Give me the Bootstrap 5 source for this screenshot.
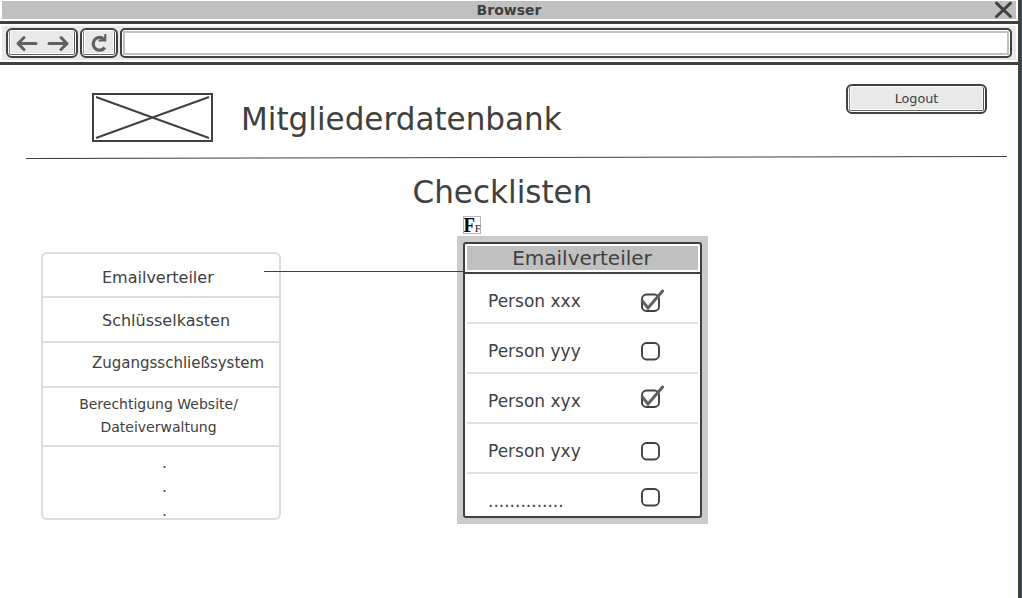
<!DOCTYPE html>
<html lang="de">
<head>
<meta charset="utf-8">
<meta name="viewport" content="width=device-width, initial-scale=1">
<title>Mitgliederdatenbank</title>
<link href="https://cdn.jsdelivr.net/npm/bootstrap@5.3.0/dist/css/bootstrap.min.css" rel="stylesheet">
<style>
  :root { --ink: #404040; --fill: #e9e9e9; --rule: #dcdcdc; }
  body { font-family: "DejaVu Sans", sans-serif; color: var(--ink); background: #fff; line-height: 1; }
  svg { display: block; }
  .window { width: 1022px; height: 598px; border-right: 1px solid #39506f; }
  .window-inner { border-right: 3px solid var(--ink); }
  .titlebar { height: 24px; padding: 1px 2px 2px; border-bottom: 3px solid var(--ink); }
  .titlebar-fill { height: 18px; background: #c0c0c0; font-size: 14px; }
  .close-x { right: 5px; top: 1px; }
  .toolbar { height: 41px; padding: 2px; border-bottom: 3px solid var(--ink); }
  .toolbar-fill { height: 34px; background: var(--fill); padding: 2px 4px; gap: 2px; }
  .wire-btn { height: 30px; border: 2px solid var(--ink); border-radius: 6px; background: #fff; padding: 1px; color: inherit; }
  .wire-face { height: 100%; background: var(--fill); border: 1px solid #888; border-top: 0; border-right-color: #555; border-bottom-color: #666; border-radius: 2px; box-shadow: inset 1px 0 #fff, inset -1px -1px #fff; }
  .btn-nav { width: 72px; }
  .btn-reload { width: 38px; }
  .address { height: 30px; border: 2px solid var(--ink); border-radius: 5px; background: #fff; padding: 1px; }
  .address-field { height: 24px; border: 2px solid #c0c0c0; }
  .masthead { height: 90px; padding-left: 92px; }
  .logo { margin-top: 28px; }
  .heading { font-size: 31.05px; line-height: 36px; font-weight: 400; }
  .site-name { margin: 36px 0 0 28px; }
  .logout { width: 141px; margin: 19px 31px 0 auto; font-size: 12.75px; }
  .logout .wire-face { padding-top: 2px; }
  .page-title { margin: 15px 0 0 412.5px; }
  .panels { padding: 6px 0 0 41px; }
  .topics { width: 240px; height: 268px; margin-top: 36px; border: 2px solid var(--rule); border-radius: 6px; }
  .topic { border-bottom: 2px solid var(--rule); font-size: 16px; line-height: 20px; white-space: nowrap; }
  .topic-1 { height: 44px; padding: 14px 0 0 59px; }
  .topic-2 { height: 45px; padding: 13px 0 0 59px; }
  .topic-3 { height: 45px; padding: 10px 0 0 49px; font-size: 15px; }
  .topic-4 { height: 59px; padding: 5px 5px 0 0; font-size: 14px; line-height: 23px; text-align: center; }
  .topic-more { padding: 4px 0 0 119px; font-size: 15px; line-height: 24px; }
  .connector { width: 199px; height: 1px; margin: 55px 0 0 -17px; background: var(--ink); z-index: 1; }
  .checklist { width: 251px; margin-left: -6px; }
  .font-icon { margin-left: 6px; overflow: visible; }
  .frame { background: #cbcbcb; padding: 6px; margin-top: 2px; }
  .sheet { height: 276px; border: 2px solid var(--ink); border-radius: 3px; background: #fff; }
  .sheet-head { height: 30px; padding: 2px 2px 2px; border-bottom: 2px solid var(--ink); }
  .sheet-title { height: 24px; background: #c0c0c0; font-size: 20px; line-height: 24px; text-align: center; padding-right: 1px; }
  .entry { height: 50px; margin: 0 2px; padding: 0 34px 0 21px; border-bottom: 2px solid #e0e0e0; font-size: 17px; line-height: 20px; }
  .entry:last-child { border: 0; height: 42px; }
  .entry-label { margin-top: 17px; }
</style>
</head>
<body>
<svg width="0" height="0" class="position-absolute" aria-hidden="true">
  <defs>
    <g id="box"><rect x="6" y="14.5" width="17" height="16.5" rx="4.5" fill="none" stroke="#404040" stroke-width="1.9"/></g>
    <g id="tick"><path d="M5.5 19 12 27 27.5 9" fill="none" stroke="#606060" stroke-width="3"/></g>
  </defs>
</svg>
<div class="window overflow-hidden">
 <div class="window-inner h-100">
  <div class="titlebar position-relative">
    <div class="titlebar-fill d-flex align-items-center justify-content-center fw-bold">Browser</div>
    <svg class="close-x position-absolute" width="19" height="18" viewBox="0 0 19 18"><path d="M2.5 2.2 16.5 15.5M16.5 2.2 2.5 15.5" stroke="#404040" stroke-width="3" stroke-linecap="round"/></svg>
  </div>
  <div class="toolbar">
    <div class="toolbar-fill d-flex">
      <div class="wire-btn btn-nav"><div class="wire-face">
        <svg width="64" height="25" viewBox="0 0 64 25"><path d="M26 12.5H8M14 6.5 8 12.5l6 6M39 12.5H57M51 6.5l6 6-6 6" fill="none" stroke="#606060" stroke-width="3" stroke-linecap="round" stroke-linejoin="round"/></svg>
      </div></div>
      <div class="wire-btn btn-reload"><div class="wire-face">
        <svg width="30" height="25" viewBox="0 0 30 25"><path d="M20.8 16.5A6.4 6.4 0 1 1 19 7.4" fill="none" stroke="#606060" stroke-width="3.2"/><path d="M21.3 3V9.6H14.5" fill="none" stroke="#606060" stroke-width="2"/><path d="M17 9 21 5V9Z" fill="#606060"/></svg>
      </div></div>
      <div class="address flex-grow-1"><div class="address-field"></div></div>
    </div>
  </div>
  <header class="masthead d-flex align-items-start">
    <svg class="logo" width="121" height="49" viewBox="0 0 121 49"><rect x="1" y="1" width="119" height="47" fill="none" stroke="#404040" stroke-width="2"/><path d="M4 4 117 45M117 4 4 45" stroke="#404040" stroke-width="1.9"/></svg>
    <h1 class="heading site-name">Mitgliederdatenbank</h1>
    <button type="button" class="wire-btn logout"><span class="wire-face d-flex align-items-center justify-content-center">Logout</span></button>
  </header>
  <svg width="1018" height="4" viewBox="0 0 1018 4"><path d="M26 3.5 1007 1.5" stroke="#404040" stroke-width="1.1"/></svg>
  <h2 class="heading page-title">Checklisten</h2>
  <main class="panels d-flex align-items-start">
    <div class="topics">
      <div class="topic topic-1">Emailverteiler</div>
      <div class="topic topic-2">Schlüsselkasten</div>
      <div class="topic topic-3">Zugangsschließsystem</div>
      <div class="topic topic-4">Berechtigung Website/<br>Dateiverwaltung</div>
      <div class="topic-more">.<br>.<br>.</div>
    </div>
    <div class="connector flex-shrink-0"></div>
    <section class="checklist">
      <svg class="font-icon" width="18" height="18" viewBox="0 0 18 18"><rect x=".5" y=".5" width="17" height="17" fill="#fff" stroke="#b5b5b5"/><text x="0.5" y="16" font-family="Liberation Serif, serif" font-weight="700" font-size="22" textLength="11.5" lengthAdjust="spacingAndGlyphs" fill="#000">F</text><text x="12" y="16" font-family="Liberation Serif, serif" font-size="10" fill="#000">F</text></svg>
      <div class="frame"><div class="sheet">
        <div class="sheet-head"><div class="sheet-title">Emailverteiler</div></div>
        <div class="entry d-flex justify-content-between"><span class="entry-label">Person xxx</span><svg width="28" height="40" viewBox="0 -4 28 40"><use href="#box" y="2"/><use href="#tick" y="3"/></svg></div>
        <div class="entry d-flex justify-content-between"><span class="entry-label">Person yyy</span><svg width="28" height="40" viewBox="0 -4 28 40"><use href="#box" y=".5"/></svg></div>
        <div class="entry d-flex justify-content-between"><span class="entry-label">Person xyx</span><svg width="28" height="40" viewBox="0 -4 28 40"><use href="#box" y="-2"/><use href="#tick" y="-1"/></svg></div>
        <div class="entry d-flex justify-content-between"><span class="entry-label">Person yxy</span><svg width="28" height="40" viewBox="0 -4 28 40"><use href="#box" y=".5"/></svg></div>
        <div class="entry d-flex justify-content-between"><span class="entry-label">..............</span><svg width="28" height="40" viewBox="0 -4 28 40"><use href="#box" y="-3.5"/></svg></div>
      </div></div>
    </section>
  </main>
 </div>
</div>
<script src="https://cdn.jsdelivr.net/npm/bootstrap@5.3.0/dist/js/bootstrap.bundle.min.js"></script>
</body>
</html>
